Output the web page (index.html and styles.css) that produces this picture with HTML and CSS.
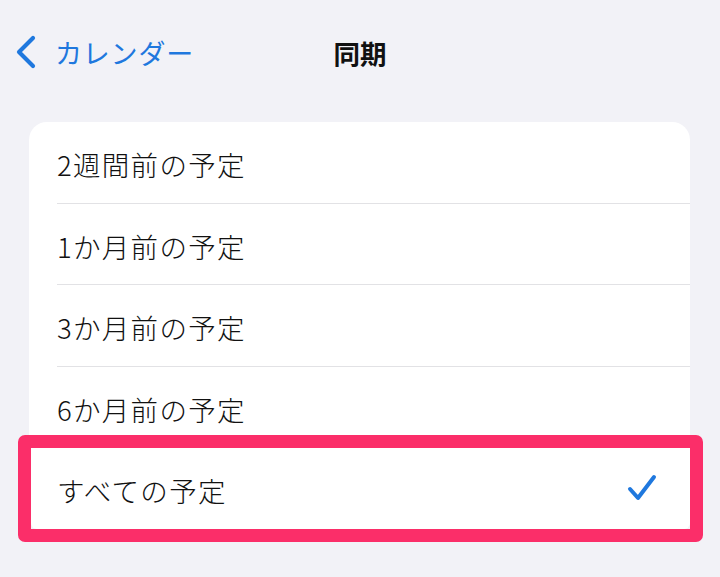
FILE: index.html
```html
<!DOCTYPE html>
<html lang="ja">
<head>
<meta charset="utf-8">
<link rel="stylesheet" href="styles.css">
</head>
<body>
<div class="page">
<div class="nav">
  <div class="back">
    <svg class="chev" width="24" height="34" viewBox="0 0 24 34"><path d="M19 3 L5 17 L19 31" fill="none" stroke="#1f78de" stroke-width="4.2" stroke-linecap="round" stroke-linejoin="round"/></svg>
    <span class="back-text">カレンダー</span>
  </div>
  <div class="title">同期</div>
  <div></div>
</div>
<div class="card">
  <div class="row"><div class="row-inner"><span>2週間前の予定</span></div></div>
  <div class="row"><div class="row-inner"><span>1か月前の予定</span></div></div>
  <div class="row"><div class="row-inner"><span>3か月前の予定</span></div></div>
  <div class="row"><div class="row-inner"><span>6か月前の予定</span></div></div>
  <div class="highlight">
    <div class="row selected"><div class="row-inner last"><span>すべての予定</span>
      <svg class="check" width="30" height="28" viewBox="0 0 30 28"><path d="M3 15 L11 24 L27 3" fill="none" stroke="#1f78de" stroke-width="4" stroke-linecap="round" stroke-linejoin="round"/></svg>
    </div></div>
  </div>
</div>
</div>
</body>
</html>
```
FILE: styles.css
```css
html, body {
  margin: 0;
  padding: 0;
  background: #f2f2f7;
  font-family: "Noto Sans CJK JP", "Noto Sans", sans-serif;
}
.page {
  min-height: 577px;
  display: flex;
  flex-direction: column;
}
.nav {
  display: grid;
  grid-template-columns: 1fr auto 1fr;
  align-items: center;
  height: 104px;
}
.back {
  display: flex;
  align-items: center;
  padding-left: 14px;
  color: #1f78de;
}
.chev {
  display: block;
  margin-right: 17px;
}
.back-text {
  font-size: 27px;
  letter-spacing: 0.8px;
}
.title {
  font-size: 26.5px;
  font-weight: 700;
  color: #111;
}
.card {
  margin: 18px 30px 0 29px;
  background: #fff;
  border-radius: 18px;
  display: flex;
  flex-direction: column;
}
.row {
  padding-left: 28px;
  display: flex;
}
.row-inner {
  flex: 1;
  height: 80.5px;
  border-bottom: 1px solid #e2e2e5;
  display: flex;
  align-items: center;
  justify-content: space-between;
  padding-right: 35px;
  font-size: 27.5px;
  font-weight: 300;
  letter-spacing: 1.3px;
  color: #111;
}
.row-inner.last {
  border-bottom: none;
}
.row-inner span {
  position: relative;
  top: 2px;
}
.highlight {
  margin: -13px -13px -12px -11px;
  border: 13px solid #fb2e69;
  border-radius: 7px;
}
.selected {
  background: #fff;
  padding-left: 26px;
  border-radius: 0 0 6px 6px;
}
.selected .row-inner {
  padding-right: 33px;
}
.check {
  display: block;
}
```
